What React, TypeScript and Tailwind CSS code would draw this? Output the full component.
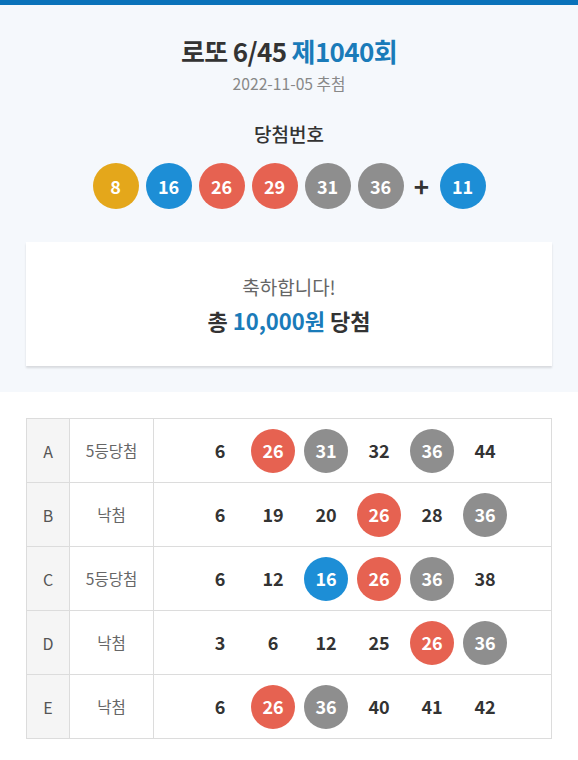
import React from 'react';

const FONT = { fontFamily: '"Noto Sans CJK KR", "Noto Sans", sans-serif' };

function ballColor(n: number) {
  if (n <= 10) return 'bg-[#e4a71b]';
  if (n <= 20) return 'bg-[#1d8ed6]';
  if (n <= 30) return 'bg-[#e66251]';
  if (n <= 40) return 'bg-[#8e8e8e]';
  return 'bg-[#6fbf4a]';
}

const winning = [8, 16, 26, 29, 31, 36];
const bonus = 11;

const games = [
  { id: 'A', result: '5등당첨', nums: [6, 26, 31, 32, 36, 44] },
  { id: 'B', result: '낙첨', nums: [6, 19, 20, 26, 28, 36] },
  { id: 'C', result: '5등당첨', nums: [6, 12, 16, 26, 36, 38] },
  { id: 'D', result: '낙첨', nums: [3, 6, 12, 25, 26, 36] },
  { id: 'E', result: '낙첨', nums: [6, 26, 36, 40, 41, 42] },
];

function Ball({ n, size = 'lg' }: { n: number; size?: 'lg' | 'sm' }) {
  const dim = size === 'lg' ? 'w-[46px] h-[46px] text-[18px]' : 'w-[44px] h-[44px] text-[18px]';
  return (
    <div className={`${dim} ${ballColor(n)} rounded-full flex items-center justify-center text-white font-semibold`}>
      {n}
    </div>
  );
}

export default function App() {
  return (
    <div className="min-h-screen bg-white text-[#333]" style={FONT}>
      <div className="h-[5px] bg-[#0a72ba]" />
      <div className="bg-[#f5f8fc] pt-[28px] pb-[26px] px-[26px]">
        <h1 className="text-center text-[26px] font-bold leading-[36px] tracking-tight">
          로또 6/45 <span className="text-[#1a7bb9]">제1040회</span>
        </h1>
        <p className="text-center text-[15.7px] text-[#888] mt-[4px] leading-[22px]">2022-11-05 추첨</p>
        <h2 className="text-center text-[19px] font-medium mt-[25px] leading-[28px]">당첨번호</h2>
        <div className="flex items-center justify-center gap-[7px] mt-[15px]">
          {winning.map((n) => (
            <Ball key={n} n={n} />
          ))}
          <span className="w-[22px] text-center text-[26px] font-bold leading-none">+</span>
          <Ball n={bonus} />
        </div>
        <div className="mt-[33px] bg-white shadow-[0_2px_2px_rgba(0,0,0,0.12)] h-[124px] flex flex-col items-center justify-center">
          <p className="text-[19px] text-[#666] leading-[28px]">축하합니다!</p>
          <p className="text-[22px] font-bold leading-[32px] mt-[3px]">
            총 <span className="text-[#1a7bb9]">10,000원</span> 당첨
          </p>
        </div>
      </div>
      <div className="px-[26px] pt-[26px] pb-[20px]">
        <div className="border border-[#dcdcdc]">
          {games.map((g, i) => (
            <div key={g.id} className={`flex ${i > 0 ? 'h-[64px] border-t border-[#dcdcdc]' : 'h-[63px]'}`}>
              <div className="w-[43px] bg-[#f5f5f5] border-r border-[#dcdcdc] flex items-center justify-center text-[16px] text-[#555]">
                {g.id}
              </div>
              <div className="w-[84px] border-r border-[#dcdcdc] flex items-center justify-center text-[15.5px] text-[#666]">
                {g.result}
              </div>
              <div className="flex-1 flex items-center justify-center">
                {g.nums.map((n) => (
                  <div key={n} className="w-[53px] flex items-center justify-center">
                    {winning.includes(n) ? (
                      <Ball n={n} size="sm" />
                    ) : (
                      <span className="text-[18px] font-semibold text-[#333]">{n}</span>
                    )}
                  </div>
                ))}
              </div>
            </div>
          ))}
        </div>
      </div>
    </div>
  );
}
